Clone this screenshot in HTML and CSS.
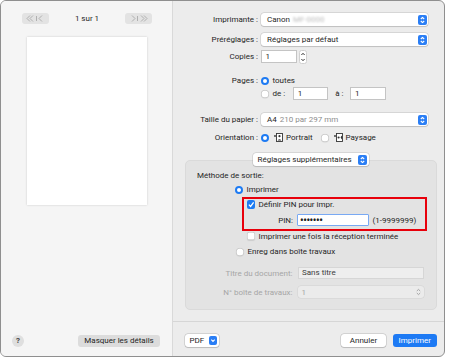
FILE: index.html
```html
<!DOCTYPE html>
<html lang="fr">
<head>
    <meta charset="UTF-8">
    <title>Imprimer</title>
    <link rel="stylesheet" href="styles.css">
</head>
<body>
<div class="window">
    <!-- Aperçu -->
    <aside class="preview">
        <div class="pager">
            <div class="nav-btn">
                <svg width="27" height="11" viewBox="0 0 27 11"><path d="M8 2.5 5 5.5 8 8.5M11 2.5 8 5.5 11 8.5M14.5 3v5M20 2.5 17 5.5 20 8.5" fill="none" stroke="#b0b0b0" stroke-width="1"/></svg>
            </div>
            <span class="page-count">1 sur 1</span>
            <div class="nav-btn">
                <svg width="27" height="11" viewBox="0 0 27 11"><path d="M7 2.5 10 5.5 7 8.5M12.5 3v5M16 2.5 19 5.5 16 8.5M19 2.5 22 5.5 19 8.5" fill="none" stroke="#b0b0b0" stroke-width="1"/></svg>
            </div>
        </div>
        <div class="sheet"></div>
        <div class="preview-foot">
            <span class="help">?</span>
            <button class="btn-hide">Masquer les détails</button>
        </div>
    </aside>

    <!-- Réglages -->
    <main class="settings">
        <div class="form">
            <div class="row">
                <span class="label">Imprimante :</span>
                <div class="popup">
                    <span class="popup-text">Canon <span class="blurred">MF-0000</span></span>
                    <svg class="popup-arrow" width="9" height="10" viewBox="0 0 9 10"><rect width="9" height="10" rx="2" fill="#2a7ef5"/><path d="M2.8 4 4.5 2.4 6.2 4M2.8 6 4.5 7.6 6.2 6" fill="none" stroke="#fff" stroke-width="1.1"/></svg>
                </div>
            </div>
            <div class="row r-presets">
                <span class="label">Préréglages :</span>
                <div class="popup">
                    <span class="popup-text">Réglages par défaut</span>
                    <svg class="popup-arrow" width="9" height="10" viewBox="0 0 9 10"><rect width="9" height="10" rx="2" fill="#2a7ef5"/><path d="M2.8 4 4.5 2.4 6.2 4M2.8 6 4.5 7.6 6.2 6" fill="none" stroke="#fff" stroke-width="1.1"/></svg>
                </div>
            </div>
            <div class="row r-copies">
                <span class="label">Copies :</span>
                <span class="field copies">1</span>
                <svg class="stepper" width="8" height="14" viewBox="0 0 8 14"><rect x="0.5" y="0.5" width="7" height="13" rx="2" fill="#fff" stroke="#d0d0d0"/><path d="M2.4 5 4 3.3 5.6 5M2.4 9 4 10.7 5.6 9" fill="none" stroke="#333" stroke-width="1"/></svg>
            </div>
            <div class="row r-pages">
                <span class="label">Pages :</span>
                <span class="radio on"></span>
                <span class="opt">toutes</span>
            </div>
            <div class="row r-range">
                <span class="radio"></span>
                <span class="opt">de :</span>
                <span class="field range-from">1</span>
                <span class="range-to">à :</span>
                <span class="field range-end">1</span>
            </div>
            <div class="row r-paper">
                <span class="label">Taille du papier :</span>
                <div class="popup">
                    <span class="popup-text">A4 <span class="muted">210 par 297 mm</span></span>
                    <svg class="popup-arrow" width="9" height="10" viewBox="0 0 9 10"><rect width="9" height="10" rx="2" fill="#2a7ef5"/><path d="M2.8 4 4.5 2.4 6.2 4M2.8 6 4.5 7.6 6.2 6" fill="none" stroke="#fff" stroke-width="1.1"/></svg>
                </div>
            </div>
            <div class="row r-orient">
                <span class="label">Orientation :</span>
                <span class="radio on"></span>
                <svg class="orient-icon" width="9" height="9" viewBox="0 0 9 9"><circle cx="1" cy="3" r="0.9" fill="#333"/><rect x="2.5" y="0.5" width="6" height="8" fill="#fff" stroke="#333" stroke-width="0.9"/><circle cx="5.5" cy="3.2" r="1.1" fill="#333"/><path d="M3.6 7.5Q5.5 4.8 7.4 7.5" fill="#333"/></svg>
                <span class="opt">Portrait</span>
                <span class="radio r-landscape"></span>
                <svg class="orient-icon" width="9" height="9" viewBox="0 0 9 9"><circle cx="1" cy="3" r="0.9" fill="#333"/><rect x="2.5" y="0.5" width="6" height="8" fill="#fff" stroke="#333" stroke-width="0.9"/><circle cx="4.6" cy="4.5" r="1.1" fill="#333"/><path d="M8 2.6Q5.3 4.5 8 6.4Z" fill="#333"/></svg>
                <span class="opt">Paysage</span>
            </div>
            <div class="row r-extra">
                <div class="popup popup-extra">
                    <span class="popup-text">Réglages supplémentaires</span>
                    <svg class="popup-arrow" width="9" height="10" viewBox="0 0 9 10"><rect width="9" height="10" rx="2" fill="#2a7ef5"/><path d="M2.8 4 4.5 2.4 6.2 4M2.8 6 4.5 7.6 6.2 6" fill="none" stroke="#fff" stroke-width="1.1"/></svg>
                </div>
            </div>

            <div class="group">
                <div class="g-row g-title">Méthode de sortie:</div>
                <div class="g-row g-print">
                    <span class="radio on"></span>
                    <span class="opt">Imprimer</span>
                </div>
                <div class="pin-box">
                    <div class="g-row pin-check">
                        <span class="check on"><svg width="9" height="9" viewBox="0 0 9 9"><path d="M2 4.6 3.8 6.5 7 2.3" fill="none" stroke="#fff" stroke-width="1.4"/></svg></span>
                        <span class="opt">Définir PIN pour impr.</span>
                    </div>
                    <div class="g-row pin-row">
                        <span class="pin-label">PIN:</span>
                        <span class="field pin-field">•••••••</span>
                        <span class="pin-range">(1-9999999)</span>
                    </div>
                </div>
                <div class="g-row g-once">
                    <span class="check"></span>
                    <span class="opt">Imprimer une fois la réception terminée</span>
                </div>
                <div class="g-row g-box">
                    <span class="radio"></span>
                    <span class="opt">Enreg dans boîte travaux</span>
                </div>
                <div class="g-row g-doc">
                    <span class="g-label">Titre du document:</span>
                    <span class="field doc-field">Sans titre</span>
                </div>
                <div class="g-row g-num">
                    <span class="g-label">N° boîte de travaux:</span>
                    <div class="popup popup-off">
                        <span class="popup-text">1</span>
                        <svg class="popup-arrow" width="9" height="10" viewBox="0 0 9 10"><path d="M2.8 4 4.5 2.4 6.2 4M2.8 6 4.5 7.6 6.2 6" fill="none" stroke="#a5a5a5" stroke-width="1"/></svg>
                    </div>
                </div>
            </div>
        </div>

        <div class="footer">
            <div class="pdf-btn">
                <span>PDF</span>
                <svg width="8" height="9" viewBox="0 0 8 9"><rect width="8" height="9" rx="2" fill="#2a7ef5"/><path d="M2.3 3.6 4 5.4 5.7 3.6" fill="none" stroke="#fff" stroke-width="1.1"/></svg>
            </div>
            <button class="btn btn-cancel">Annuler</button>
            <button class="btn btn-print">Imprimer</button>
        </div>
    </main>
</div>
</body>
</html>
```

FILE: styles.css
```css
* {
    box-sizing: border-box;
}
body {
    margin: 0;
    background: #fff;
    font-family: Roboto, "Liberation Sans", sans-serif;
    font-size: 8px;
    color: #1f1f1f;
}
button {
    font: inherit;
    color: inherit;
    border: none;
    padding: 0;
}
.window {
    width: 445px;
    height: 357px;
    border: 1px solid #8f8f8f;
    border-radius: 6px;
    overflow: hidden;
    display: flex;
    background: #ececec;
}

/* aperçu */
.preview {
    width: 172px;
    flex-shrink: 0;
    background: #f5f5f5;
    border-right: 1px solid #d9d9d9;
    display: flex;
    flex-direction: column;
}
.pager {
    display: flex;
    align-items: center;
    justify-content: space-between;
    width: 130px;
    height: 11px;
    margin: 12px 0 0 21px;
}
.nav-btn {
    width: 27px;
    height: 11px;
    background: #e3e3e3;
    border-radius: 3px;
    display: flex;
}
.sheet {
    width: 120px;
    height: 168px;
    margin: 13px 0 0 26px;
    background: #fff;
    box-shadow: 0 0 2px rgba(0, 0, 0, .18);
}
.preview-foot {
    margin-top: auto;
    margin-bottom: 9px;
    height: 13px;
    padding-left: 11px;
    display: flex;
    align-items: center;
}
.help {
    width: 12px;
    height: 12px;
    border-radius: 50%;
    background: #dfdfdf;
    font-size: 8px;
    font-weight: bold;
    color: #444;
    text-align: center;
    line-height: 12px;
}
.btn-hide {
    margin-left: 54px;
    width: 82px;
    height: 12px;
    background: #dcdcdc;
    border-radius: 3px;
}

/* réglages */
.settings {
    flex: 1;
    display: flex;
    flex-direction: column;
}
.form {
    flex: 1;
    padding-top: 12px;
}
.row {
    display: flex;
    align-items: center;
    height: 13px;
}
.label {
    width: 85px;
    margin-right: 3px;
    text-align: right;
    white-space: nowrap;
    flex-shrink: 0;
}
.r-presets { margin-top: 7px; }
.r-copies { margin-top: 4px; }
.r-pages { margin-top: 11px; }
.r-range { padding-left: 88px; }
.r-paper { margin-top: 13px; }
.r-orient { margin-top: 5px; }
.r-extra {
    margin-top: 9px;
    padding-left: 80px;
    position: relative;
    z-index: 1;
}

.popup {
    width: 167px;
    height: 12.5px;
    background: #fff;
    border-radius: 3px;
    box-shadow: 0 0 0 0.5px rgba(0, 0, 0, .16), 0 0.5px 1px rgba(0, 0, 0, .12);
    display: flex;
    align-items: center;
    justify-content: space-between;
    padding: 0 1.5px 0 6px;
    white-space: nowrap;
}
.blurred {
    color: #bbb;
    filter: blur(1.2px);
    margin-left: 1px;
}
.muted {
    color: #8d8d8d;
    margin-left: 1px;
}
.popup-extra {
    width: 116px;
    padding-left: 4.5px;
    padding-right: 2.5px;
}

.field {
    height: 12.5px;
    background: #fff;
    border: 0.5px solid #c4c4c4;
    display: flex;
    align-items: center;
    padding-left: 3.5px;
    flex-shrink: 0;
}
.copies { width: 36px; }
.stepper { margin-left: 1.5px; }

.radio {
    width: 8px;
    height: 8px;
    border-radius: 50%;
    background: #fff;
    box-shadow: inset 0 0 0 0.5px #b3b3b3, 0 0.5px 1px rgba(0, 0, 0, .12);
    flex-shrink: 0;
}
.radio.on {
    border: 2.5px solid #1e7bf3;
    box-shadow: none;
}
.opt {
    margin-left: 3.5px;
    white-space: nowrap;
}
.range-from {
    width: 35px;
    margin-left: 8px;
}
.range-to { margin-left: 7px; }
.range-end {
    width: 36px;
    margin-left: 7px;
}
.orient-icon { margin-left: 5px; }
.r-orient .opt { margin-left: 3px; }
.r-landscape { margin-left: 8px; }

/* groupe */
.group {
    height: 150px;
    margin: -6px 7px 0 12px;
    padding-top: 8px;
    background: #e3e3e3;
    border: 1px solid #dadada;
    border-radius: 5px;
}
.g-row {
    display: flex;
    align-items: center;
}
.g-title {
    height: 12px;
    padding-left: 11px;
}
.g-print {
    height: 13px;
    margin-top: 2px;
    padding-left: 49px;
}
.pin-box {
    width: 185px;
    height: 33.5px;
    margin: 1px 0 0 55.5px;
    border: 2px solid #e8000b;
    padding: 0 0 0 3px;
}
.pin-check { height: 11px; }
.check {
    width: 8.5px;
    height: 8.5px;
    border-radius: 2px;
    background: #fff;
    box-shadow: inset 0 0 0 0.5px #b3b3b3, 0 0.5px 1px rgba(0, 0, 0, .1);
    flex-shrink: 0;
    display: flex;
}
.check.on {
    background: #1e7bf3;
    box-shadow: none;
}
.pin-row {
    height: 13px;
    margin-top: 3.5px;
}
.pin-label {
    width: 46.5px;
    margin-right: 3.5px;
    text-align: right;
}
.pin-field {
    width: 72px;
    border: 1.5px solid #79a9f3;
    border-radius: 1px;
    font-size: 10px;
    font-weight: bold;
    letter-spacing: -0.4px;
    padding-left: 2.5px;
}
.pin-range { margin-left: 4px; }
.g-once {
    height: 11px;
    padding-left: 60.5px;
}
.g-box {
    height: 12px;
    margin-top: 4px;
    padding-left: 50px;
}
.g-doc {
    height: 13px;
    margin-top: 9px;
}
.g-num {
    height: 13px;
    margin-top: 6px;
}
.g-label {
    width: 106.5px;
    margin-right: 5px;
    text-align: right;
    color: #a6a6a6;
    white-space: nowrap;
}
.doc-field {
    width: 126.5px;
    height: 12.3px;
    background: #eeeeee;
    border-color: #d6d6d6;
    color: #3c3c3c;
}
.popup-off {
    width: 126.5px;
    height: 11.5px;
    background: #ebebeb;
    color: #a6a6a6;
    padding-left: 4px;
    box-shadow: 0 0 0 0.5px rgba(0, 0, 0, .08);
}

/* pied */
.footer {
    height: 35px;
    border-top: 1px solid #d6d6d6;
    padding: 12px 7px 0 12px;
    display: flex;
    align-items: flex-start;
}
.pdf-btn {
    width: 34px;
    height: 13px;
    background: #fff;
    border-radius: 3px;
    box-shadow: 0 0 0 0.5px rgba(0, 0, 0, .2), 0 0.5px 1px rgba(0, 0, 0, .12);
    display: flex;
    align-items: center;
    justify-content: space-between;
    padding: 0 2px 0 4.5px;
}
.btn {
    height: 13px;
    border-radius: 3px;
}
.btn-cancel {
    width: 45px;
    margin-left: auto;
    background: #fff;
    box-shadow: 0 0 0 0.5px rgba(0, 0, 0, .2), 0 0.5px 1px rgba(0, 0, 0, .12);
}
.btn-print {
    width: 44.5px;
    margin-left: 6.5px;
    background: #1d7af4;
    color: #fff;
}
```
